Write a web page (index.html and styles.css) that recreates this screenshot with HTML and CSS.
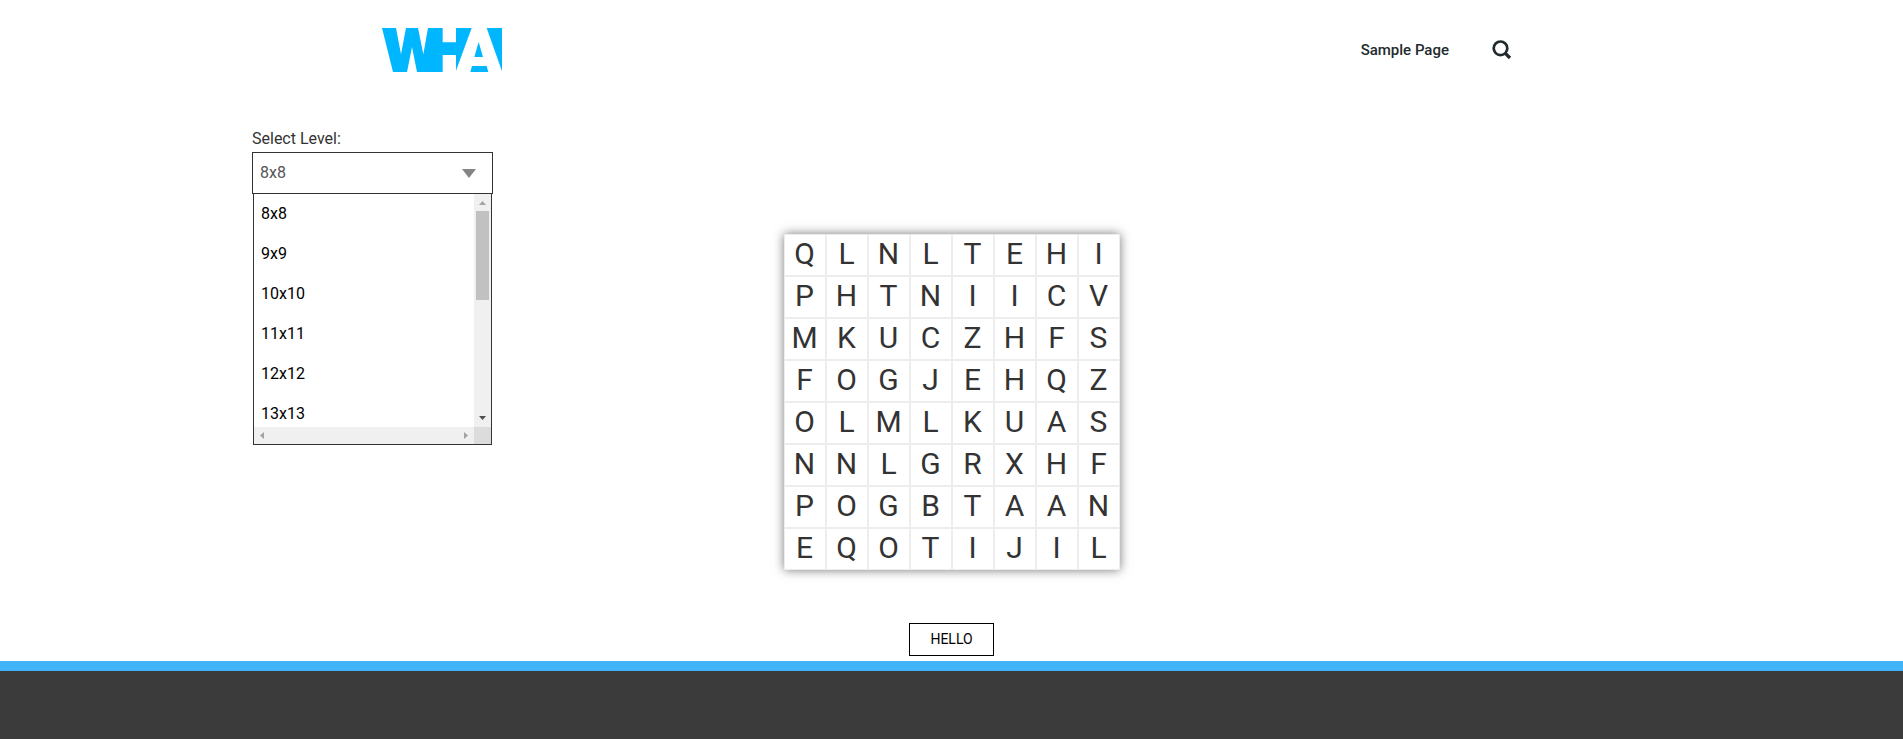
FILE: index.html
```html
<!DOCTYPE html>
<html lang="en">
<head>
<meta charset="utf-8">
<title>Word Search</title>
<link rel="stylesheet" href="styles.css">
</head>
<body>
<header class="header">
  <svg class="logo" viewBox="0 0 360 132" preserveAspectRatio="none" fill="#00b7ff">
    <path d="M0 0H42L57 79L72 0H108L124 79L138 0H182V43H222V0H269L222 128V132H222V81H182V132H105L90 57L75 132H33Z"/>
    <path d="M314 0H360V130ZM290 42L303 87H277ZM270 114H314L319 132H265Z"/>
  </svg>
  <nav class="nav">
    <a class="nav-link">Sample Page</a>
    <svg class="search" viewBox="0 0 20 20" fill="none" stroke="#212b2e"><circle cx="8.5" cy="8.3" r="6.8" stroke-width="2.7"/><path d="M13 13L18 18" stroke-width="3.2"/></svg>
  </nav>
</header>
<main class="main">
  <section class="level">
    <label class="label">Select Level:</label>
    <div class="select"><span class="value">8x8</span><svg class="caret" viewBox="0 0 14 9"><path d="M0 0H14L7 9Z" fill="#858585"/></svg></div>
    <div class="dropdown">
      <div class="options"><div>8x8</div><div>9x9</div><div>10x10</div><div>11x11</div><div>12x12</div><div>13x13</div></div>
      <div class="vbar"><svg class="arrow" viewBox="0 0 17 17"><path d="M5 11H12L8.5 7Z" fill="#a3a3a3"/></svg><div class="thumb"></div><svg class="arrow down" viewBox="0 0 17 17"><path d="M5 6H12L8.5 10Z" fill="#505050"/></svg></div>
      <div class="hbar"><svg class="arrow" viewBox="0 0 17 17"><path d="M10 5V12L6 8.5Z" fill="#a3a3a3"/></svg><svg class="arrow" viewBox="0 0 17 17"><path d="M7 5V12L11 8.5Z" fill="#a3a3a3"/></svg></div>
      <div class="corner"></div>
    </div>
  </section>
  <section class="board">
    <i>Q</i><i>L</i><i>N</i><i>L</i><i>T</i><i>E</i><i>H</i><i>I</i>
    <i>P</i><i>H</i><i>T</i><i>N</i><i>I</i><i>I</i><i>C</i><i>V</i>
    <i>M</i><i>K</i><i>U</i><i>C</i><i>Z</i><i>H</i><i>F</i><i>S</i>
    <i>F</i><i>O</i><i>G</i><i>J</i><i>E</i><i>H</i><i>Q</i><i>Z</i>
    <i>O</i><i>L</i><i>M</i><i>L</i><i>K</i><i>U</i><i>A</i><i>S</i>
    <i>N</i><i>N</i><i>L</i><i>G</i><i>R</i><i>X</i><i>H</i><i>F</i>
    <i>P</i><i>O</i><i>G</i><i>B</i><i>T</i><i>A</i><i>A</i><i>N</i>
    <i>E</i><i>Q</i><i>O</i><i>T</i><i>I</i><i>J</i><i>I</i><i>L</i>
  </section>
  <button class="hello">HELLO</button>
</main>
<footer class="footer"></footer>
</body>
</html>
```
FILE: styles.css
```css
* { box-sizing: border-box; }
body { margin: 0; height: 739px; overflow: hidden; display: flex; flex-direction: column; background: #fff; color: #333; font-family: Roboto, sans-serif; font-size: 16px; }
.header { height: 100px; display: flex; justify-content: space-between; align-items: center; padding: 0 391px 0 382px; }
.logo { width: 120px; height: 44px; }
.nav { display: flex; align-items: center; gap: 43px; }
.nav-link { font-size: 15px; font-weight: 500; color: #212b2e; }
.search { width: 20px; height: 20px; }
.main { height: 561px; display: flex; flex-direction: column; align-items: center; padding: 28px 0 0 1px; }
.level { height: 106px; width: 1400px; position: relative; }
.label { display: block; height: 24px; line-height: 21px; }
.select { width: 241px; height: 42px; border: 1px solid #333; display: flex; justify-content: space-between; align-items: center; padding: 0 16px 0 7px; color: #555; }
.value { padding-bottom: 2px; }
.caret { width: 14px; height: 9px; }
.dropdown { position: absolute; left: 1px; top: 65px; width: 239px; height: 252px; border: 1px solid #333; display: grid; grid-template: 233px 17px / 220px 17px; background: #fff; color: #000; }
.options { overflow: hidden; padding-left: 7px; line-height: 40px; }
.vbar { background: #f0f0f0; display: flex; flex-direction: column; align-items: center; }
.arrow { width: 17px; height: 17px; flex: none; }
.thumb { width: 13px; height: 89px; background: #c1c1c1; }
.down { margin-top: auto; }
.hbar { background: #f0f0f0; display: flex; justify-content: space-between; }
.corner { background: #dcdcdc; }
.board { display: grid; grid-template-columns: repeat(8, 42px); box-shadow: 0 0 10px #777; background: #fff; flex: none; }
.board i { height: 42px; border: 1px solid #ededed; font-style: normal; font-size: 30px; line-height: 38px; text-align: center; padding-right: 1px; }
.hello { margin: 53px 1px 0 0; width: 85px; height: 33px; flex: none; border: 1px solid #000; background: #fff; color: #000; font: 14px Roboto, sans-serif; padding: 0 0 1px; }
.footer { height: 78px; border-top: 10px solid #40b3f9; background: #3b3b3b; }
```
